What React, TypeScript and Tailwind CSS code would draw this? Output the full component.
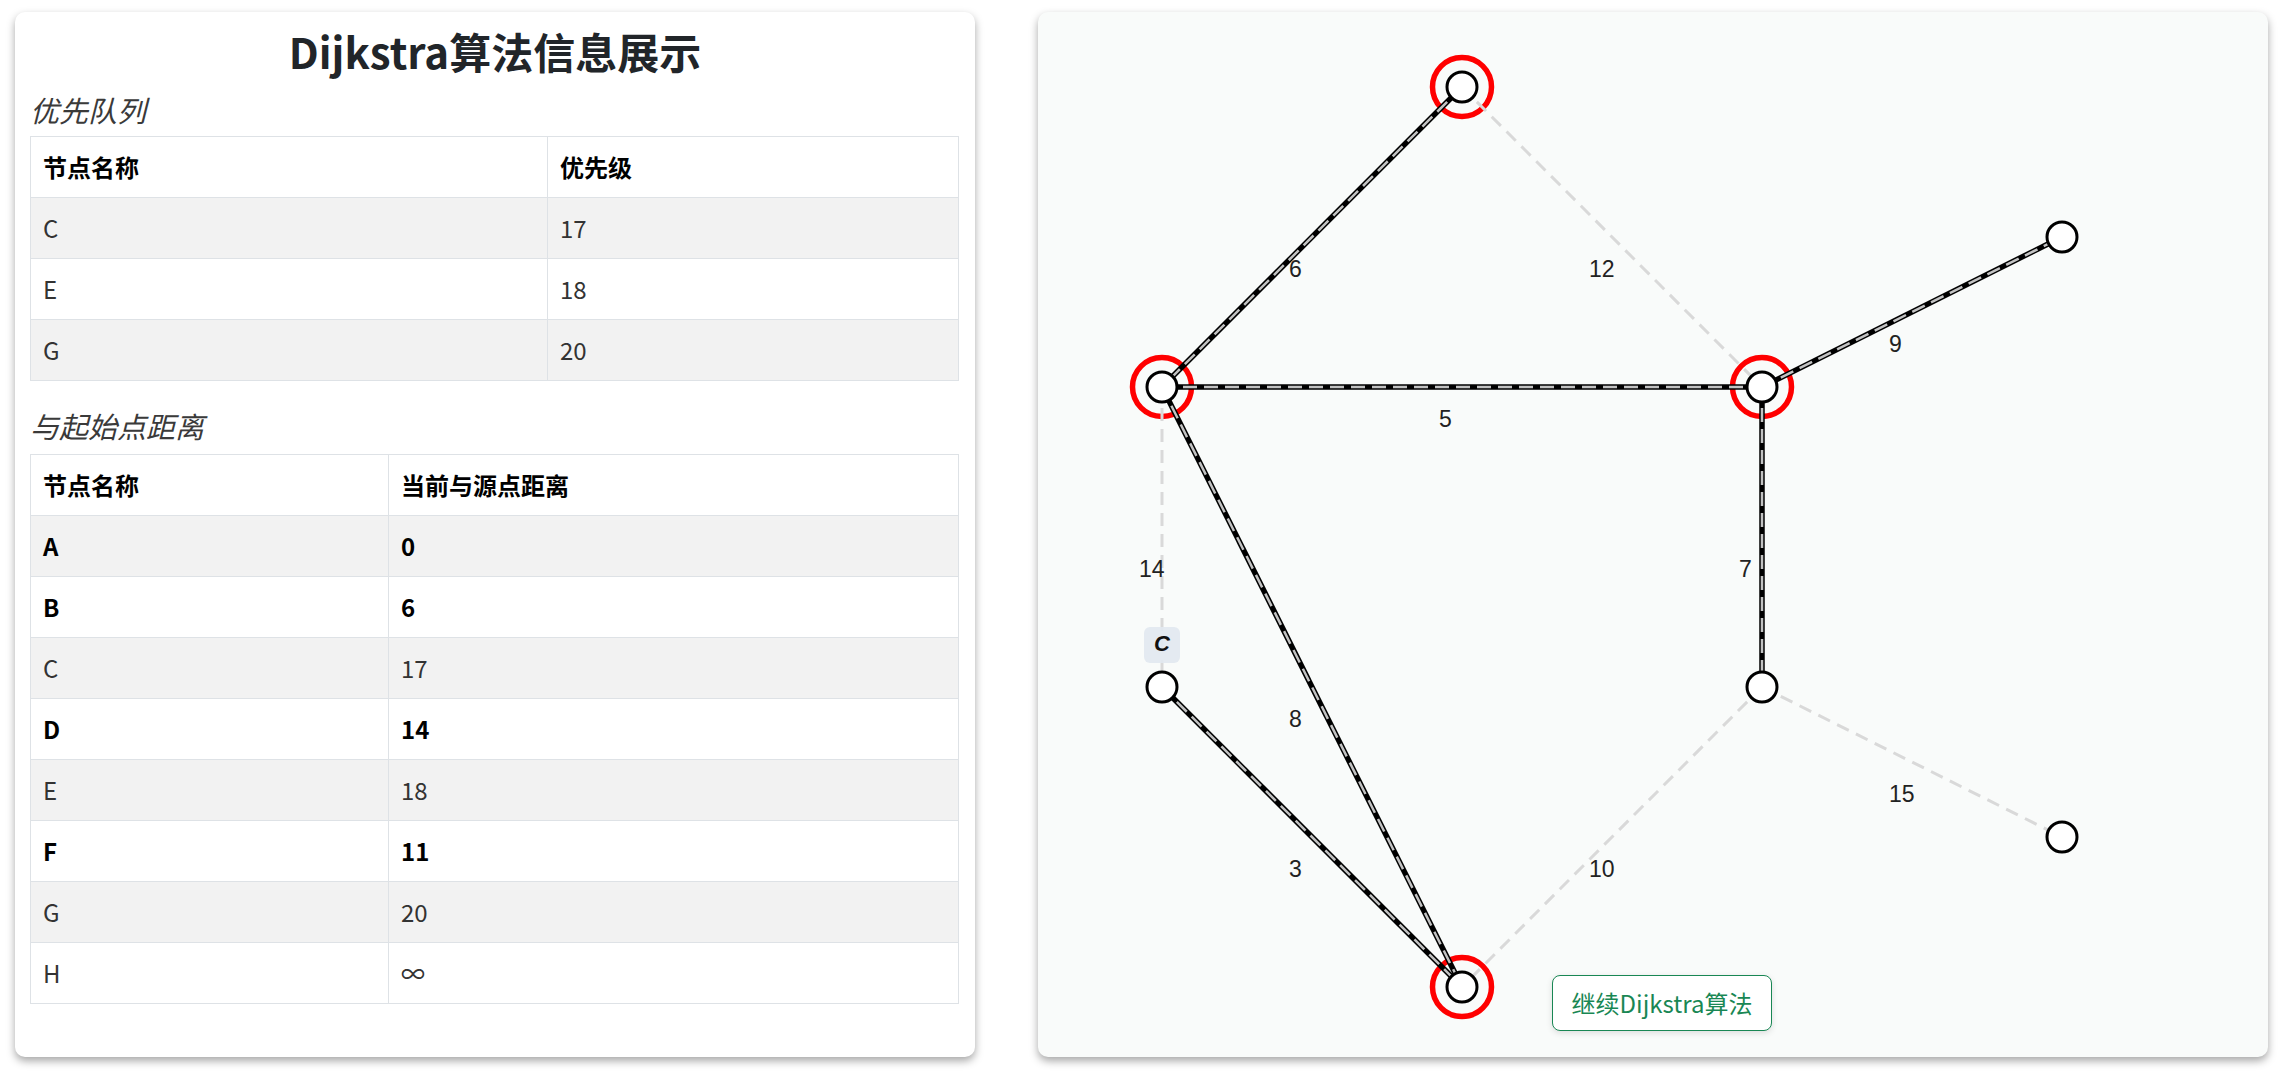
const FONT = { fontFamily: '"Noto Sans CJK SC", "Noto Sans", sans-serif' };

type Node = { id: string; x: number; y: number; ring?: boolean };
type Edge = { a: string; b: string; w: number; on: boolean };

const nodes: Node[] = [
  { id: "A", x: 1462, y: 87, ring: true },
  { id: "B", x: 1162, y: 387, ring: true },
  { id: "E", x: 1762, y: 387, ring: true },
  { id: "F", x: 2062, y: 237 },
  { id: "C", x: 1162, y: 687 },
  { id: "G", x: 1762, y: 687 },
  { id: "H", x: 2062, y: 837 },
  { id: "S", x: 1462, y: 987, ring: true },
];

const edges: Edge[] = [
  { a: "A", b: "B", w: 6, on: true },
  { a: "A", b: "E", w: 12, on: false },
  { a: "B", b: "E", w: 5, on: true },
  { a: "E", b: "F", w: 9, on: true },
  { a: "B", b: "C", w: 14, on: false },
  { a: "E", b: "G", w: 7, on: true },
  { a: "B", b: "S", w: 8, on: true },
  { a: "C", b: "S", w: 3, on: true },
  { a: "G", b: "S", w: 10, on: false },
  { a: "G", b: "H", w: 15, on: false },
];

const queue = [
  { name: "C", value: "17" },
  { name: "E", value: "18" },
  { name: "G", value: "20" },
];

const dist = [
  { name: "A", value: "0", done: true },
  { name: "B", value: "6", done: true },
  { name: "C", value: "17", done: false },
  { name: "D", value: "14", done: true },
  { name: "E", value: "18", done: false },
  { name: "F", value: "11", done: true },
  { name: "G", value: "20", done: false },
  { name: "H", value: "∞", done: false },
];

const find = (id: string) => nodes.find((n) => n.id === id)!;

function InfoTable({
  head,
  rows,
  firstCol,
}: {
  head: [string, string];
  rows: { name: string; value: string; done?: boolean }[];
  firstCol: string;
}) {
  return (
    <table className="w-[929px] border-collapse text-[24px] leading-[36px]">
      <thead>
        <tr>
          <th className={`${firstCol} border border-[#dee2e6] px-3 py-3 text-left font-bold text-black`}>{head[0]}</th>
          <th className="border border-[#dee2e6] px-3 py-3 text-left font-bold text-black">{head[1]}</th>
        </tr>
      </thead>
      <tbody>
        {rows.map((r, i) => (
          <tr key={r.name} className={i % 2 === 0 ? "bg-[#f2f2f2]" : "bg-white"}>
            <td className={`border border-[#dee2e6] px-3 py-3 ${r.done ? "font-bold text-black" : "text-[#333]"}`}>{r.name}</td>
            <td className={`border border-[#dee2e6] px-3 py-3 ${r.done ? "font-bold text-black" : "text-[#333]"}`}>{r.value}</td>
          </tr>
        ))}
      </tbody>
    </table>
  );
}

function Graph() {
  return (
    <svg className="absolute inset-0 h-full w-full" viewBox="0 0 1230 1045">
      <g transform="translate(-1038,-12)">
        {nodes
          .filter((n) => n.ring)
          .map((n) => (
            <circle key={"r" + n.id} cx={n.x} cy={n.y} r={29.5} fill="none" stroke="#ff0000" strokeWidth={5.5} />
          ))}
        {edges.map((e) => {
          const p = find(e.a);
          const q = find(e.b);
          if (!e.on) {
            return (
              <line
                key={e.a + e.b}
                x1={p.x}
                y1={p.y}
                x2={q.x}
                y2={q.y}
                stroke="#d9d9d9"
                strokeWidth={3}
                strokeDasharray="13 8"
              />
            );
          }
          return (
            <g key={e.a + e.b}>
              <line x1={p.x} y1={p.y} x2={q.x} y2={q.y} stroke="#000" strokeWidth={5.5} />
              <line x1={p.x} y1={p.y} x2={q.x} y2={q.y} stroke="#c2c2c2" strokeWidth={2.5} strokeDasharray="14 7" />
            </g>
          );
        })}
        {nodes.map((n) => (
          <circle key={n.id} cx={n.x} cy={n.y} r={15} fill="#fff" stroke="#000" strokeWidth={3} />
        ))}
        {edges.map((e) => {
          const p = find(e.a);
          const q = find(e.b);
          const mx = (p.x + q.x) / 2;
          const my = (p.y + q.y) / 2;
          return (
            <text
              key={"t" + e.a + e.b}
              x={mx - 23}
              y={my + 40}
              fontSize={23}
              fill="#222"
              style={{ fontFamily: '"Liberation Sans", Arial, sans-serif' }}
            >
              {e.w}
            </text>
          );
        })}
        <rect x={1144} y={627} width={36} height={36} rx={6} fill="#e2e8f0" fillOpacity={0.92} />
        <text
          x={1162}
          y={651}
          textAnchor="middle"
          fontSize={22}
          fontWeight="bold"
          fontStyle="italic"
          fill="#111"
          style={{ fontFamily: '"Liberation Sans", Arial, sans-serif' }}
        >
          C
        </text>
      </g>
    </svg>
  );
}

export default function App() {
  return (
    <div className="flex h-[1071px] w-[2280px] gap-[63px] bg-white pl-[15px] pr-[12px] pt-[12px]" style={FONT}>
      <div className="flex h-[1045px] w-[960px] flex-col rounded-[10px] bg-white px-[15px] pt-[14px] shadow-[0_4px_9px_rgba(0,0,0,0.35)]">
        <h1 className="text-center text-[42px] font-bold leading-[50px] text-[#212529]">Dijkstra算法信息展示</h1>
        <h2 className="mt-[16px] text-[29px] italic leading-[34px] text-[#3a3a3a]">优先队列</h2>
        <div className="mt-[10px]">
          <InfoTable head={["节点名称", "优先级"]} rows={queue} firstCol="w-[517px]" />
        </div>
        <h2 className="mt-[27px] text-[29px] italic leading-[34px] text-[#3a3a3a]">与起始点距离</h2>
        <div className="mt-[12px]">
          <InfoTable head={["节点名称", "当前与源点距离"]} rows={dist} firstCol="w-[358px]" />
        </div>
      </div>
      <div className="relative h-[1045px] flex-1 overflow-hidden rounded-[10px] bg-[#f9fbfa] shadow-[0_4px_9px_rgba(0,0,0,0.35)]">
        <Graph />
        <button className="absolute left-[514px] top-[963px] h-[56px] w-[220px] rounded-lg border border-[#198754] bg-white text-[24px] text-[#198754] shadow-[0_2px_6px_rgba(0,0,0,0.12)]">
          继续Dijkstra算法
        </button>
      </div>
    </div>
  );
}
